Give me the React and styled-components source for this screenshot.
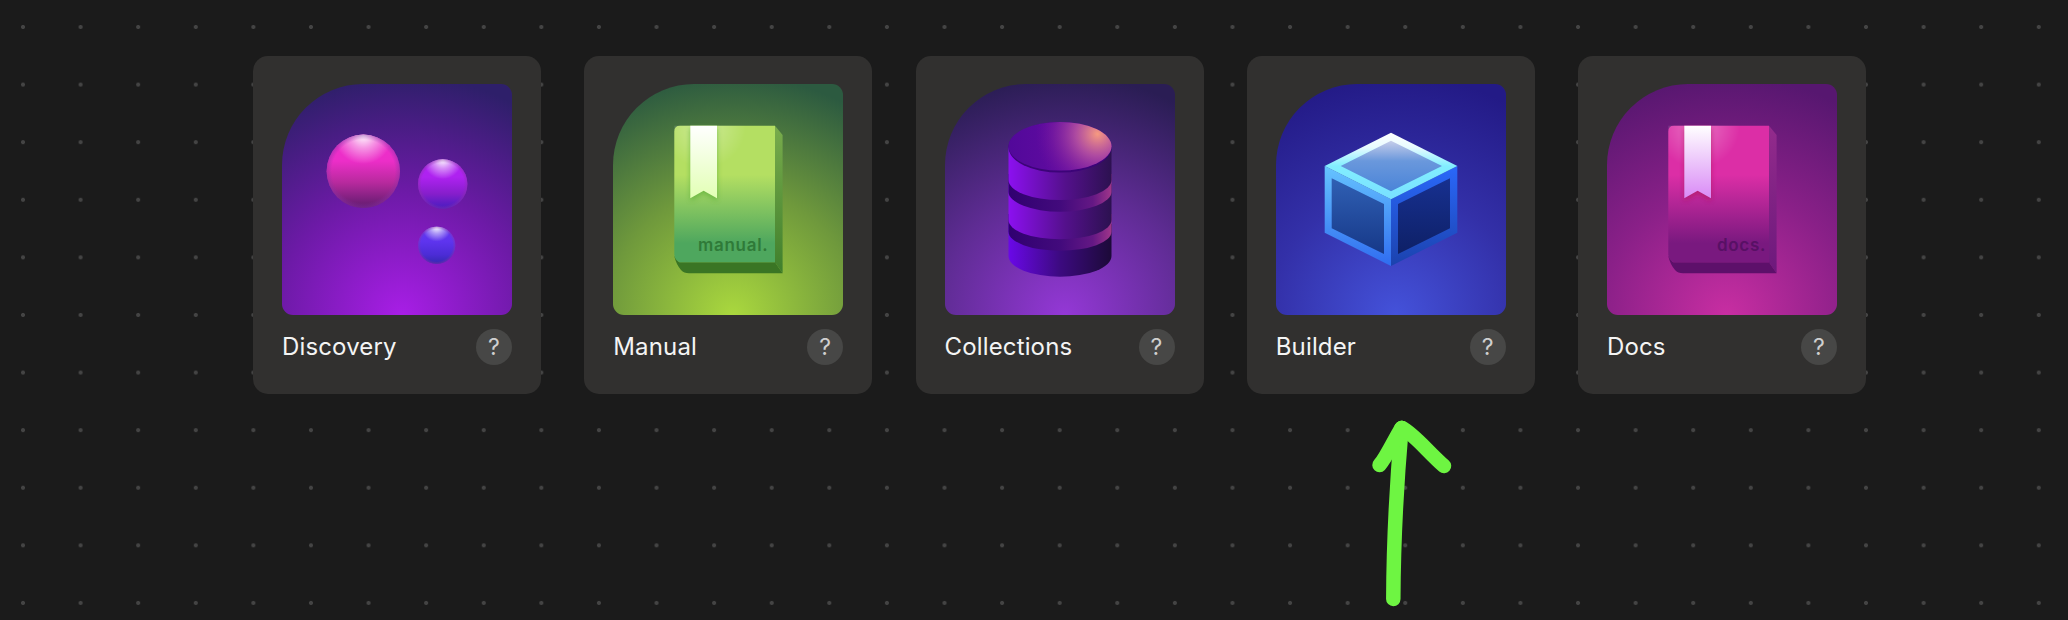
import React from "react";
import styled, { createGlobalStyle } from "styled-components";

const GlobalStyle = createGlobalStyle`
  html, body {
    margin: 0;
    padding: 0;
    background: #1b1b1b;
  }
`;

const Page = styled.div`
  position: relative;
  width: 100%;
  height: 620px;
  overflow: hidden;
  box-sizing: border-box;
  padding: 56px 0 0 253px;
  font-family: Inter, "Liberation Sans", sans-serif;
  background-color: #1b1b1b;
  background-image: radial-gradient(circle, #444 0, #444 1.6px, transparent 2.4px);
  background-size: 57.6px 57.6px;
  background-position: -5.8px -1.8px;
`;

const CardRow = styled.div`
  display: flex;
  gap: 43.25px;
`;

const Card = styled.div`
  width: 288px;
  height: 338px;
  box-sizing: border-box;
  padding: 28px 29px 0;
  background: #31302f;
  border-radius: 15px;
`;

const Tile = styled.div`
  width: 230px;
  height: 231px;
  border-radius: 81px 11px 11px 11px;
  background: radial-gradient(circle at 52% 100%, ${(p) => p.$glow} 0, ${(p) => p.$mid} 48%, ${(p) => p.$dark} 92%);
  overflow: hidden;

  svg {
    display: block;
  }
`;

const CardFooter = styled.div`
  display: flex;
  align-items: center;
  justify-content: space-between;
  margin-top: 14px;
`;

const Label = styled.span`
  font-size: 24px;
  line-height: 36px;
  letter-spacing: 0.15px;
  color: #f4f4f4;
`;

const HelpButton = styled.button`
  width: 36px;
  height: 36px;
  padding: 0;
  border: none;
  border-radius: 50%;
  background: #474746;
  color: #cfcfcf;
  font-family: inherit;
  font-size: 23px;
  line-height: 36px;
  text-align: center;
`;

const ArrowMark = styled.svg`
  position: absolute;
  left: 1360px;
  top: 410px;
`;

const IconFrame = ({ children }) => (
  <svg width="230" height="231" viewBox="0 0 230 231">
    {children}
  </svg>
);

const Ball = ({ id, cx, cy, r, stops }) => (
  <>
    <defs>
      <linearGradient id={id} x1="0" y1="0" x2="0" y2="1">
        {stops.map(([offset, color]) => (
          <stop key={offset} offset={offset} stopColor={color} />
        ))}
      </linearGradient>
    </defs>
    <circle cx={cx} cy={cy} r={r} fill={`url(#${id})`} />
    <circle cx={cx} cy={cy} r={r} fill="url(#ballShine)" />
    <circle cx={cx} cy={cy} r={r} fill="url(#ballRim)" />
  </>
);

const DiscoveryIcon = () => (
  <IconFrame>
    <defs>
      <radialGradient id="ballRim">
        <stop offset="0.86" stopColor="#8a30a8" stopOpacity="0" />
        <stop offset="1" stopColor="#8a30a8" stopOpacity="0.5" />
      </radialGradient>
      <radialGradient id="ballShine" cx="0.5" cy="0" r="0.4">
        <stop offset="0" stopColor="#ffffff" stopOpacity="1" />
        <stop offset="0.45" stopColor="#ffffff" stopOpacity="0.5" />
        <stop offset="1" stopColor="#ffffff" stopOpacity="0" />
      </radialGradient>
    </defs>
    <Ball
      id="ballBig"
      cx={81.3}
      cy={87.3}
      r={36.7}
      stops={[
        [0, "#ee2ecb"],
        [0.36, "#ec2ec8"],
        [0.65, "#b82a9e"],
        [1, "#5e1b6e"],
      ]}
    />
    <Ball
      id="ballMid"
      cx={160.7}
      cy={100}
      r={24.7}
      stops={[
        [0, "#b022f2"],
        [0.36, "#ae22f0"],
        [0.7, "#861ecb"],
        [1, "#461cc0"],
      ]}
    />
    <Ball
      id="ballSmall"
      cx={154.7}
      cy={161.3}
      r={18.6}
      stops={[
        [0, "#6238f0"],
        [0.4, "#5e34ee"],
        [0.75, "#4c2cd6"],
        [1, "#3428b0"],
      ]}
    />
  </IconFrame>
);

const BookIcon = ({ id, word, wordX, c }) => (
  <IconFrame>
    <defs>
      <linearGradient id={`${id}Face`} x1="0" y1="0" x2="0" y2="1">
        <stop offset="0" stopColor={c.faceTop} />
        <stop offset="0.36" stopColor={c.faceTop} />
        <stop offset="0.86" stopColor={c.faceLow} />
        <stop offset="1" stopColor={c.faceLow} />
      </linearGradient>
      <radialGradient id={`${id}Sheen`} gradientUnits="userSpaceOnUse" cx="91" cy="42" r="42">
        <stop offset="0" stopColor="#fff" stopOpacity="0.35" />
        <stop offset="1" stopColor="#fff" stopOpacity="0" />
      </radialGradient>
      <linearGradient id={`${id}Side`} x1="0" y1="0" x2="0" y2="1">
        <stop offset="0" stopColor={c.sideTop} />
        <stop offset="1" stopColor={c.sideLow} />
      </linearGradient>
      <linearGradient id={`${id}Mark`} x1="0" y1="0" x2="0" y2="1">
        <stop offset="0" stopColor="#ffffff" />
        <stop offset="1" stopColor={c.mark} />
      </linearGradient>
      <filter id={`${id}Blur`} x="-30%" y="-30%" width="160%" height="160%">
        <feGaussianBlur stdDeviation="2.5" />
      </filter>
    </defs>
    <path d="M162 41.7 L169.6 51 V189.3 L162 178.3 Z" fill={`url(#${id}Side)`} />
    <path d="M61.3 172 Q63 180 68 186 Q71 189.3 76 189.3 H169.6 L162 178.3 H66 Z" fill={c.base} />
    <path
      d="M67 41.7 H162 V178.3 H67 Q61.3 176 61.3 170 V47.4 Q61.3 41.7 67 41.7 Z"
      fill={`url(#${id}Face)`}
    />
    <rect x="61.3" y="41.7" width="100.7" height="60" fill={`url(#${id}Sheen)`} />
    <path d="M77.3 44 H104 V117 L90.6 109 L77.3 117 Z" fill={c.shadow} opacity="0.75" filter={`url(#${id}Blur)`} />
    <path d="M77.3 41.7 H104 V114.3 L90.6 106.7 L77.3 114.3 Z" fill={`url(#${id}Mark)`} />
    <text x={wordX} y="167" fontFamily="Inter, Lato, sans-serif" fontWeight="600" fontSize="17" letterSpacing="0.7" fill={c.word}>
      {word}
    </text>
  </IconFrame>
);

const manualColors = {
  faceTop: "#b4df62",
  faceLow: "#4ea75e",
  sideTop: "#79ac4c",
  sideLow: "#3f7f2c",
  base: "#3a7524",
  mark: "#e2ffb4",
  shadow: "#5fb03a",
  word: "#2f7a38",
};

const docsColors = {
  faceTop: "#dc2ea6",
  faceLow: "#79197f",
  sideTop: "#932b8c",
  sideLow: "#6d197c",
  base: "#5d106a",
  mark: "#d98af6",
  shadow: "#b01a60",
  word: "#581065",
};

// one cylinder layer: flat top (hidden by the layer above), curved bottom edge
const layer = (top, edge, ry) =>
  `M63.5 ${top} V${edge} A51.5 ${ry} 0 0 0 166.5 ${edge} V${top} Z`;

const CollectionsIcon = () => (
  <IconFrame>
    <defs>
      <linearGradient id="sideUpper" x1="0" y1="0" x2="1" y2="0">
        <stop offset="0" stopColor="#8c10f0" />
        <stop offset="0.55" stopColor="#54108c" />
        <stop offset="1" stopColor="#2c1150" />
      </linearGradient>
      <linearGradient id="sideLower" x1="0" y1="0" x2="1" y2="0">
        <stop offset="0" stopColor="#6a08e8" />
        <stop offset="0.5" stopColor="#3c0a80" />
        <stop offset="1" stopColor="#1c0a38" />
      </linearGradient>
      <linearGradient id="discBand" x1="0" y1="0" x2="1" y2="0">
        <stop offset="0" stopColor="#300070" />
        <stop offset="0.5" stopColor="#420a7c" />
        <stop offset="0.82" stopColor="#641884" />
        <stop offset="1" stopColor="#a0368a" />
      </linearGradient>
      <linearGradient id="topFace" x1="0" y1="0" x2="1" y2="0">
        <stop offset="0" stopColor="#52089a" />
        <stop offset="1" stopColor="#6d0fa6" />
      </linearGradient>
      <radialGradient id="topGlow" gradientUnits="userSpaceOnUse" cx="152.5" cy="50" r="62">
        <stop offset="0" stopColor="#f79a80" />
        <stop offset="0.35" stopColor="#c05aa0" stopOpacity="0.8" />
        <stop offset="1" stopColor="#7a10a0" stopOpacity="0" />
      </radialGradient>
    </defs>
    <path d={layer(140, 172, 20.7)} fill="url(#sideLower)" />
    <path d={layer(130, 147.7, 19)} fill="url(#discBand)" />
    <path d={layer(100, 136, 19.3)} fill="url(#sideUpper)" />
    <path d={layer(90, 107.7, 20)} fill="url(#discBand)" />
    <path d={layer(63.3, 96, 20)} fill="url(#sideUpper)" />
    <ellipse cx="115" cy="63.3" rx="51.5" ry="25.3" fill="#3c0478" />
    <ellipse cx="115" cy="62.3" rx="51.5" ry="24.3" fill="url(#topFace)" />
    <ellipse cx="115" cy="62.3" rx="51.5" ry="24.3" fill="url(#topGlow)" />
  </IconFrame>
);

const BuilderIcon = () => (
  <IconFrame>
    <defs>
      <linearGradient id="cubeTopFrame" x1="0" y1="0" x2="0" y2="1">
        <stop offset="0" stopColor="#ffffff" />
        <stop offset="0.22" stopColor="#e8fbff" />
        <stop offset="0.5" stopColor="#82eeff" />
        <stop offset="1" stopColor="#78e0ff" />
      </linearGradient>
      <linearGradient id="cubeTopInner" x1="0" y1="0" x2="0" y2="1">
        <stop offset="0" stopColor="#c6cdea" />
        <stop offset="0.4" stopColor="#6a98dc" />
        <stop offset="1" stopColor="#4a84d8" />
      </linearGradient>
      <linearGradient id="cubeLeftFrame" x1="0" y1="0" x2="0" y2="1">
        <stop offset="0" stopColor="#66c4ff" />
        <stop offset="1" stopColor="#2f6cf0" />
      </linearGradient>
      <linearGradient id="cubeLeftInner" x1="0" y1="0" x2="0" y2="1">
        <stop offset="0" stopColor="#3060b4" />
        <stop offset="1" stopColor="#163888" />
      </linearGradient>
      <linearGradient id="cubeRightFrame" x1="0" y1="0" x2="0" y2="1">
        <stop offset="0" stopColor="#2a68fa" />
        <stop offset="1" stopColor="#1b42ae" />
      </linearGradient>
      <linearGradient id="cubeRightInner" x1="0" y1="0" x2="0" y2="1">
        <stop offset="0" stopColor="#173090" />
        <stop offset="1" stopColor="#0e2066" />
      </linearGradient>
    </defs>
    <polygon points="48.7,82 115,115.3 115,182 48.7,148.7" fill="url(#cubeLeftFrame)" />
    <polygon points="181.3,82 115,115.3 115,182 181.3,148.7" fill="url(#cubeRightFrame)" />
    <polygon points="115,48.7 181.3,82 115,115.3 48.7,82" fill="url(#cubeTopFrame)" />
    <polygon points="115,56.7 166,82 115,107.3 64.7,82" fill="url(#cubeTopInner)" />
    <polygon points="55.7,94.3 108,120 108,170 55.7,144.3" fill="url(#cubeLeftInner)" />
    <polygon points="122,120 174,94.3 174,144.3 122,170" fill="url(#cubeRightInner)" />
  </IconFrame>
);

const cards = [
  {
    name: "Discovery",
    tone: { glow: "#a81ee6", mid: "#6c1aa6", dark: "#2e1f6a" },
    icon: <DiscoveryIcon />,
  },
  {
    name: "Manual",
    tone: { glow: "#aad83e", mid: "#6f993c", dark: "#2c5a40" },
    icon: <BookIcon id="manual" word="manual." wordX="85" c={manualColors} />,
  },
  {
    name: "Collections",
    tone: { glow: "#9438d6", mid: "#5f2c94", dark: "#2a1d54" },
    icon: <CollectionsIcon />,
  },
  {
    name: "Builder",
    tone: { glow: "#4452da", mid: "#3330a8", dark: "#231a86" },
    icon: <BuilderIcon />,
  },
  {
    name: "Docs",
    tone: { glow: "#c82ea2", mid: "#8a2088", dark: "#571770" },
    icon: <BookIcon id="docs" word="docs." wordX="110" c={docsColors} />,
  },
];

const App = () => {
  return (
    <Page>
      <GlobalStyle />
      <CardRow>
        {cards.map((card) => (
          <Card key={card.name}>
            <Tile $glow={card.tone.glow} $mid={card.tone.mid} $dark={card.tone.dark}>
              {card.icon}
            </Tile>
            <CardFooter>
              <Label>{card.name}</Label>
              <HelpButton>?</HelpButton>
            </CardFooter>
          </Card>
        ))}
      </CardRow>
      <ArrowMark width="100" height="210" viewBox="1360 410 100 210">
        <g fill="none" stroke="#6ef542" strokeWidth="14.5" strokeLinecap="round" strokeLinejoin="round">
          <path d="M1393.3 599 C1393.5 550 1397 480 1401.5 428" />
          <path d="M1379.5 465 C1386 458 1394 440 1401.5 428" />
          <path d="M1402 428 C1414 434 1428 452 1444 466" />
        </g>
      </ArrowMark>
    </Page>
  );
};

export default App;
